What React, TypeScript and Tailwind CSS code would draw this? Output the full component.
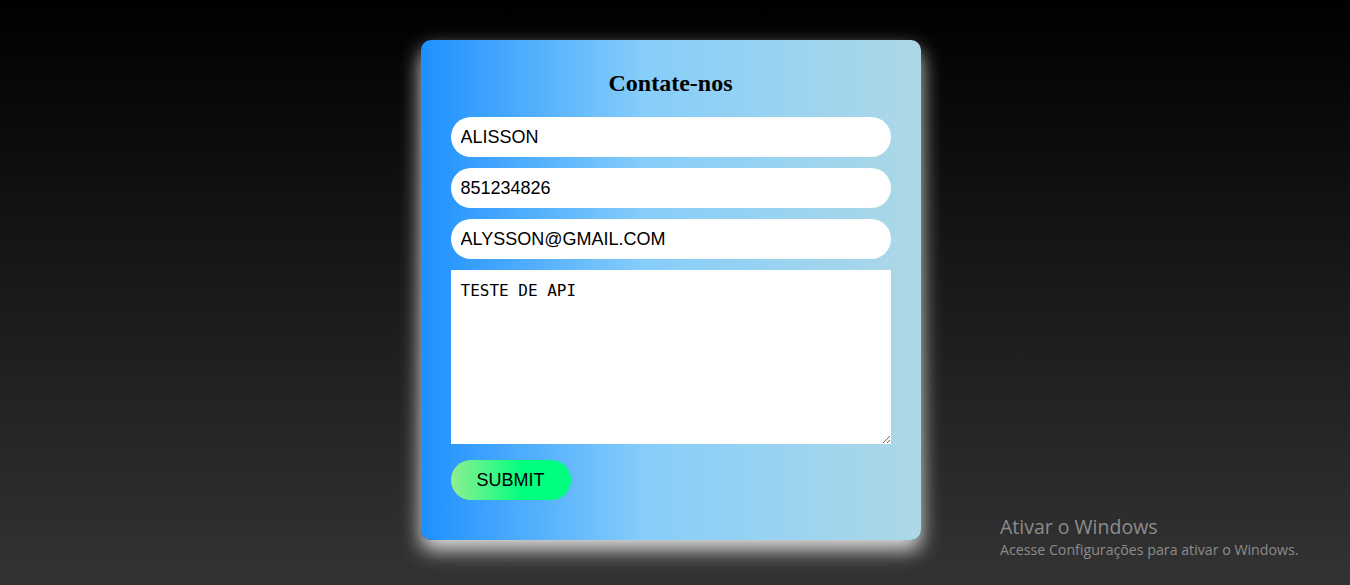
import { useState } from "react";

export default function App() {
  const [nome, setNome] = useState("ALISSON");
  const [fone, setFone] = useState("851234826");
  const [email, setEmail] = useState("ALYSSON@GMAIL.COM");
  const [msg, setMsg] = useState("TESTE DE API");

  const inputCls =
    "block w-full h-[40px] rounded-[20px] bg-white px-[10px] text-[18px] text-black outline-none font-['Liberation_Sans',Arial,sans-serif]";

  return (
    <div className="relative w-full h-[585px] overflow-hidden bg-[linear-gradient(to_bottom,#000000,#333333)] flex items-center justify-center pr-[9px] pb-[5px]">
      <form
        onSubmit={(e) => e.preventDefault()}
        className="w-[500px] h-[500px] rounded-[10px] px-[30px] pt-[29px] bg-[linear-gradient(to_right,#1e90ff,#87cefa_45%,#add8e6)] shadow-[0_10px_20px_rgba(255,255,255,0.85)]"
      >
        <h2 className="h-[28px] leading-[28px] text-center text-[24px] font-bold text-black mb-[20px] font-['Liberation_Serif','Times_New_Roman',serif]">
          Contate-nos
        </h2>
        <input className={inputCls + " mb-[11px]"} value={nome} onChange={(e) => setNome(e.target.value)} />
        <input className={inputCls + " mb-[11px]"} value={fone} onChange={(e) => setFone(e.target.value)} />
        <input className={inputCls + " mb-[11px]"} value={email} onChange={(e) => setEmail(e.target.value)} />
        <textarea
          className="block w-full h-[174px] bg-white p-[10px] text-[16px] leading-[22px] text-black outline-none font-['DejaVu_Sans_Mono','Liberation_Mono',monospace]"
          value={msg}
          onChange={(e) => setMsg(e.target.value)}
        />
        <button
          type="submit"
          className="mt-[16px] w-[120px] h-[40px] rounded-[20px] text-[18px] text-black bg-[linear-gradient(to_right,#90ee90,#00ff7f_60%)] font-['Liberation_Sans',Arial,sans-serif]"
        >
          SUBMIT
        </button>
      </form>

      <div className="absolute left-[1000px] top-[514px] text-[#8c8c8c] font-['Open_Sans','Noto_Sans',sans-serif]">
        <div className="text-[19.5px] leading-[26px]">Ativar o Windows</div>
        <div className="text-[14.2px] leading-[19px]">Acesse Configurações para ativar o Windows.</div>
      </div>
    </div>
  );
}
